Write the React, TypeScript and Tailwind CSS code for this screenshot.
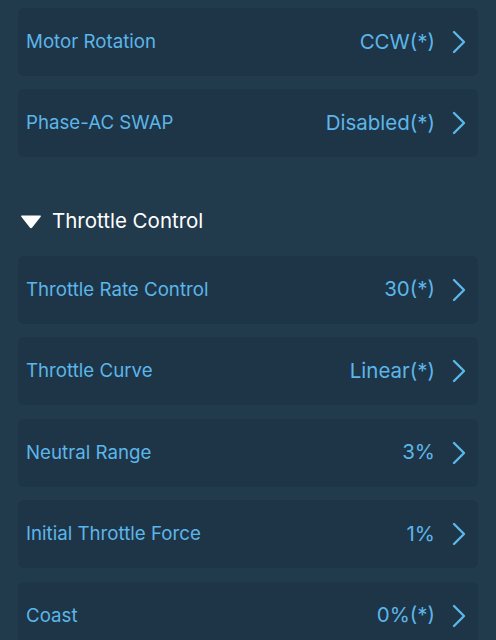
import React from 'react';

const Chevron = () => (
  <svg width="16" height="24" viewBox="0 0 16 24" fill="none" className="shrink-0">
    <path d="M3 2 L13 12 L3 22" stroke="#5cb6ea" strokeWidth="2.4" strokeLinecap="round" strokeLinejoin="round" />
  </svg>
);

const Row = ({ label, value }: { label: string; value: string }) => (
  <div className="mx-[18px] h-[68px] rounded-md bg-[#1e3547] flex items-center pl-2 pr-[11px]">
    <span className="text-[18.7px] text-[#5cb6ea]">{label}</span>
    <span className="ml-auto text-[20.5px] text-[#5cb6ea] mr-[16px]">{value}</span>
    <Chevron />
  </div>
);

const App = () => {
  return (
    <div
      className="w-[496px] h-[640px] overflow-hidden bg-[#213a4c] pt-[8px]"
      style={{ fontFamily: 'Inter, "Noto Sans", sans-serif' }}
    >
      <div className="flex flex-col gap-[13px]">
        <Row label="Motor Rotation" value="CCW(*)" />
        <Row label="Phase-AC SWAP" value="Disabled(*)" />
      </div>

      <div className="flex items-center gap-[10px] pl-[20px] mt-[49px] mb-[19px]">
        <svg width="22" height="15" viewBox="0 0 22 15">
          <path d="M2 1.5 H20 Q21.5 1.5 20.7 2.8 L12.2 13.5 Q11 15 9.8 13.5 L1.3 2.8 Q0.5 1.5 2 1.5 Z" fill="#ffffff" />
        </svg>
        <span className="text-[20.5px] text-white">Throttle Control</span>
      </div>

      <div className="flex flex-col gap-[13.5px]">
        <Row label="Throttle Rate Control" value="30(*)" />
        <Row label="Throttle Curve" value="Linear(*)" />
        <Row label="Neutral Range" value="3%" />
        <Row label="Initial Throttle Force" value="1%" />
        <Row label="Coast" value="0%(*)" />
      </div>
    </div>
  );
};

export default App;
